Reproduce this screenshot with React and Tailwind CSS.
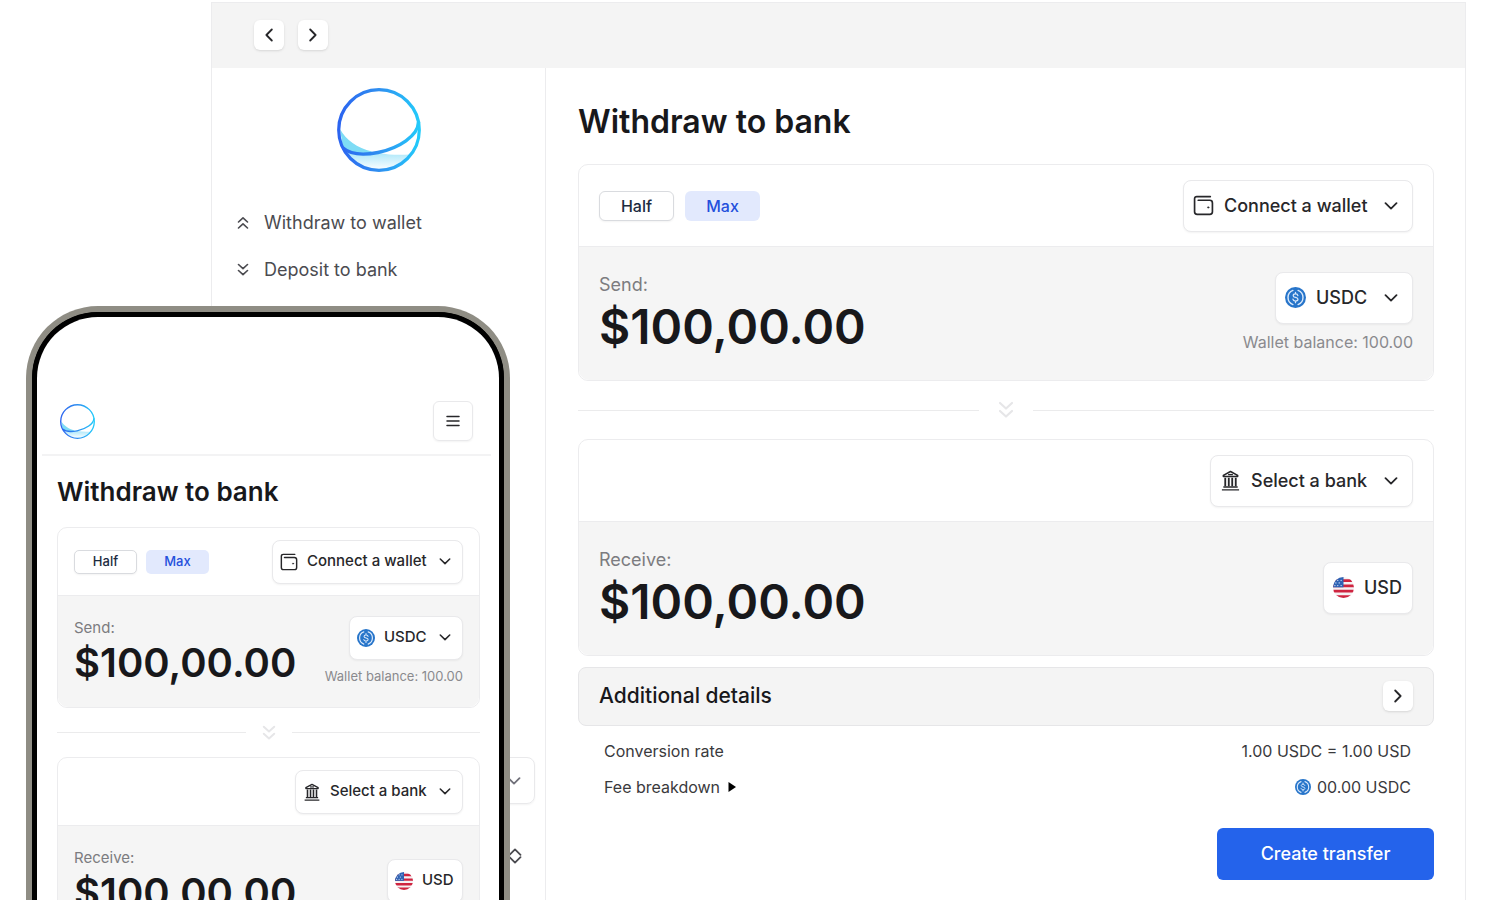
import React, { useId, useState } from "react";
import clsx from "clsx";

function Logo({ className }) {
  const id = useId();
  return (
    <svg viewBox="0 0 84 84" className={className} fill="none" aria-hidden="true">
      <defs>
        <linearGradient id={`${id}-ring`} x1="0" y1="42" x2="84" y2="42" gradientUnits="userSpaceOnUse">
          <stop offset="0" stopColor="#2b62f0" />
          <stop offset="0.5" stopColor="#2f8ff0" />
          <stop offset="1" stopColor="#22cdfb" />
        </linearGradient>
        <linearGradient id={`${id}-water`} x1="0" y1="64" x2="0" y2="80" gradientUnits="userSpaceOnUse">
          <stop offset="0" stopColor="#a9e6f9" />
          <stop offset="1" stopColor="#f4fcff" />
        </linearGradient>
      </defs>
      <path d="M3 41C9 52 20 60 35 63.500C30 67 12 67 6 60Z" fill="#7edcf5" />
      <path d="M10 64C20 68 32 67 42 65C52 67 62 67 73 66.500C66 76 55 82 42 82C28 82 17 75 10 64Z" fill={`url(#${id}-water)`} />
      <circle cx="42" cy="42" r="40.300" stroke={`url(#${id}-ring)`} strokeWidth="3.200" />
      <path d="M6 60C14 67 28 67 41 64.500C62 60 81 48 81.500 34" stroke={`url(#${id}-ring)`} strokeWidth="3.400" />
    </svg>
  );
}

function Chevron({ className }) {
  return (
    <svg viewBox="0 0 14 8" className={clsx("shrink-0", className)} fill="none" stroke="currentColor" strokeWidth="1.8" strokeLinecap="round" strokeLinejoin="round" aria-hidden="true">
      <path d="M1.500 1.200L7 6.600L12.500 1.200" />
    </svg>
  );
}

function DoubleChevron({ className }) {
  return (
    <svg viewBox="0 0 16 18" className={clsx("shrink-0", className)} fill="none" stroke="currentColor" strokeWidth="2.200" strokeLinecap="round" strokeLinejoin="round" aria-hidden="true">
      <path d="M2 2L8 7.500L14 2M2 10L8 15.500L14 10" />
    </svg>
  );
}

function WalletIcon({ className }) {
  return (
    <svg viewBox="0 0 20 20" className={clsx("shrink-0", className)} fill="none" stroke="currentColor" strokeWidth="1.6" strokeLinecap="round" strokeLinejoin="round" aria-hidden="true">
      <path d="M16.500 1.500H3.500A2 2 0 0 0 1.500 3.500V16A2.500 2.500 0 0 0 4 18.500H16A2.500 2.500 0 0 0 18.500 16V7.500A2.500 2.500 0 0 0 16 5H5" />
      <circle cx="14.500" cy="11.800" r="0.700" fill="currentColor" strokeWidth="0.500" />
    </svg>
  );
}

function BankIcon({ className }) {
  return (
    <svg viewBox="0 0 20 22" className={clsx("shrink-0", className)} fill="none" stroke="currentColor" aria-hidden="true">
      <path d="M2.500 6.800V5.600L10 1.600L17.500 5.600V6.800Z" strokeWidth="1.600" strokeLinejoin="round" />
      <path d="M7.500 4.800H12.500" strokeWidth="1.400" />
      <path d="M4.500 8V17M8.200 8V17M11.800 8V17M15.500 8V17" strokeWidth="1.900" />
      <path d="M2.500 17.800H17.500M1 20.800H19" strokeWidth="1.500" />
    </svg>
  );
}

function UsdcIcon({ className }) {
  return (
    <svg viewBox="0 0 22 22" className={clsx("shrink-0", className)} fill="none" stroke="#d9e8fa" strokeLinecap="round" aria-hidden="true">
      <circle cx="11" cy="11" r="11" fill="#2775ca" stroke="none" />
      <path d="M8.300 3.600A7.900 7.900 0 0 0 8.300 18.400M13.700 3.600A7.900 7.900 0 0 1 13.700 18.400" strokeWidth="1.500" />
      <path d="M13.500 9C13.300 7.800 12.300 7.300 11 7.300C9.600 7.300 8.600 8 8.600 9.100C8.600 11.600 13.600 10.300 13.600 12.900C13.600 14.100 12.500 14.700 11 14.700C9.600 14.700 8.500 14.100 8.300 12.800M11 5.600V7.300M11 14.700V16.400" strokeWidth="1.300" />
    </svg>
  );
}

function UsFlag({ className }) {
  const id = useId();
  return (
    <svg viewBox="0 0 22 22" className={clsx("shrink-0", className)} aria-hidden="true">
      <clipPath id={id}>
        <circle cx="11" cy="11" r="11" />
      </clipPath>
      <g clipPath={`url(#${id})`}>
        <rect width="22" height="22" fill="#f5f1f3" />
        <path d="M0 3.700H22M0 9.300H22M0 14.900H22M0 20.500H22" stroke="#cf2440" strokeWidth="2.900" />
        <rect width="11" height="10.800" fill="#2f62b4" />
        <g fill="#dce8fa">
          <circle cx="5" cy="3.500" r="0.700" />
          <circle cx="8.500" cy="3.500" r="0.700" />
          <circle cx="3" cy="6.200" r="0.700" />
          <circle cx="6.500" cy="6.200" r="0.700" />
          <circle cx="2" cy="9" r="0.700" />
          <circle cx="5" cy="9" r="0.700" />
          <circle cx="8.500" cy="9" r="0.700" />
        </g>
      </g>
    </svg>
  );
}

function Dropdown({ icon: Icon, label, option, compact, hideChevron }) {
  return (
    <label
      className={clsx(
        "flex items-center rounded-lg border border-[#e9e9eb] bg-white font-medium text-[#27272a] shadow-xs",
        compact ? "h-11 gap-[9px] pl-[7px] text-[15px]" : "h-[52px] gap-[10px] pl-[9px] text-lg",
        hideChevron ? (compact ? "pr-2" : "pr-[10px]") : compact ? "pr-[11px]" : "pr-[14px]"
      )}
    >
      <Icon className={compact ? "h-[18px] w-[18px]" : "h-[21px] w-[21px]"} />
      <select aria-label={label} className="appearance-none bg-transparent outline-none">
        <option>{option}</option>
      </select>
      {!hideChevron && <Chevron className={compact ? "ml-[3px] w-3" : "ml-[6px] w-[14px]"} />}
    </label>
  );
}

function SmallButton({ children, label }) {
  return (
    <button
      aria-label={label}
      className="flex h-[30px] w-[30px] items-center justify-center rounded-md bg-white text-[#27272a] shadow-sm"
    >
      {children}
    </button>
  );
}

function TransferCard({ title, amount, header, side, compact }) {
  const id = useId();
  const [value, setValue] = useState(amount);

  return (
    <section className="rounded-[10px] border border-[#ececee] bg-white">
      <div className={clsx("flex items-center justify-between", compact ? "h-[67px] px-4" : "h-[81px] px-5")}>
        {header}
      </div>
      <div
        className={clsx(
          "flex items-center justify-between rounded-b-[10px] border-t border-[#ececee] bg-[#f5f5f5]",
          compact ? "h-28 px-4 pb-[2px]" : "h-[134px] px-5 pb-[2px]"
        )}
      >
        <div className="min-w-0 flex-1">
          <label htmlFor={id} className={clsx("block text-[#7c7c80]", compact ? "text-[15px] leading-6" : "text-lg leading-7")}>
            {title}
          </label>
          <input
            id={id}
            type="text"
            value={value}
            onChange={(e) => setValue(e.target.value)}
            className={clsx(
              "block w-full bg-transparent font-semibold text-[#18181b] outline-none",
              compact ? "h-[46px] text-[40px]" : "h-14 text-5xl"
            )}
          />
        </div>
        <div className="flex flex-col items-end gap-[6px]">{side}</div>
      </div>
    </section>
  );
}

function TransferForm({ compact }) {
  const quick = compact ? "h-6 w-[63px] rounded-[5px] text-[13px]" : "h-[30px] w-[75px] rounded-md text-base";

  return (
    <>
      <TransferCard
        title="Send:"
        amount="$100,00.00"
        compact={compact}
        header={
          <>
            <div className={clsx("flex", compact ? "gap-[9px]" : "gap-[11px]")}>
              <button className={clsx("border border-[#d9dbdf] bg-white font-medium text-[#1c2b3f] shadow-xs", quick)}>
                Half
              </button>
              <button className={clsx("bg-[#e2e9fd] font-medium text-[#2450dc]", quick)}>Max</button>
            </div>
            <Dropdown icon={WalletIcon} label="Wallet" option="Connect a wallet" compact={compact} />
          </>
        }
        side={
          <>
            <Dropdown icon={UsdcIcon} label="Currency" option="USDC" compact={compact} />
            <p className={clsx("text-[#8a8a8e]", compact ? "text-[13px] leading-5" : "text-base leading-6")}>
              Wallet balance: 100.00
            </p>
          </>
        }
      />

      <div className={clsx("flex items-center", compact ? "h-[49px] gap-4" : "h-[58px] gap-[19px]")}>
        <hr className="flex-1 border-[#ebebec]" />
        <DoubleChevron className={clsx("text-[#e6e6e8]", compact ? "w-[14px]" : "w-4")} />
        <hr className="flex-1 border-[#ebebec]" />
      </div>

      <TransferCard
        title="Receive:"
        amount="$100,00.00"
        compact={compact}
        header={
          <>
            <span />
            <Dropdown icon={BankIcon} label="Bank" option="Select a bank" compact={compact} />
          </>
        }
        side={<Dropdown icon={UsFlag} label="Payout currency" option="USD" compact={compact} hideChevron />}
      />
    </>
  );
}

function Sidebar() {
  return (
    <aside className="flex w-[334px] shrink-0 flex-col border-r border-[#ececee]">
      <Logo className="mt-5 h-[84px] w-[84px] self-center" />
      <nav className="mt-[27px] flex flex-col px-[25px] text-lg text-[#4b4b50]">
        <a href="#wallet" className="flex h-[47px] items-center gap-[15px]">
          <DoubleChevron className="w-3 rotate-180" />
          Withdraw to wallet
        </a>
        <a href="#bank" className="flex h-[47px] items-center gap-[15px]">
          <DoubleChevron className="w-3" />
          Deposit to bank
        </a>
      </nav>
      <div className="mt-auto flex flex-col items-end pr-[10px] pb-8">
        <button
          aria-label="Network"
          className="flex h-[47px] w-full items-center justify-end rounded-lg border border-[#e9e9eb] pr-[13px] text-[#71717a] shadow-xs"
        >
          <Chevron className="w-[14px]" />
        </button>
        <button aria-label="Account" className="mt-10 mr-[13px] flex h-6 flex-col items-center justify-center text-[#4b4b50]">
          <Chevron className="w-[14px] rotate-180" />
          <Chevron className="w-[14px]" />
        </button>
      </div>
    </aside>
  );
}

function Desktop() {
  return (
    <div className="mt-[2px] mr-[31px] ml-[211px] flex flex-1 flex-col border border-b-0 border-[#ececee]">
      <header className="flex h-[65px] items-center gap-[14px] bg-[#f4f4f4] pb-[2px] pl-[42px]">
        <SmallButton label="Back">
          <Chevron className="w-[14px] rotate-90" />
        </SmallButton>
        <SmallButton label="Forward">
          <Chevron className="w-[14px] -rotate-90" />
        </SmallButton>
      </header>
      <div className="flex flex-1">
        <Sidebar />
        <main className="flex min-w-0 flex-1 flex-col pt-[34px] pr-[31px] pb-5 pl-8">
          <h1 className="mb-[22px] text-[32px] leading-10 font-semibold text-[#18181b]">Withdraw to bank</h1>
          <TransferForm />

          <div className="mt-[11px] flex h-[59px] items-center justify-between rounded-lg border border-[#e6e6e8] bg-[#f4f4f4] px-5 pb-[2px]">
            <h2 className="text-[21px] font-medium text-[#18181b]">Additional details</h2>
            <SmallButton label="Show details">
              <Chevron className="w-[14px] -rotate-90" />
            </SmallButton>
          </div>

          <dl className="mt-[7px] pr-[23px] pl-[26px] text-base text-[#3a3a3d]">
            <div className="flex h-9 items-center justify-between">
              <dt>Conversion rate</dt>
              <dd>1.00 USDC = 1.00 USD</dd>
            </div>
            <div className="flex h-9 items-center justify-between">
              <dt>
                <button className="flex items-center gap-2">
                  Fee breakdown
                  <svg viewBox="0 0 8 10" className="h-[10px] w-2 fill-black" aria-hidden="true">
                    <path d="M0.500 0L8 5L0.500 10Z" />
                  </svg>
                </button>
              </dt>
              <dd className="flex items-center gap-[6px]">
                <UsdcIcon className="w-4" />
                00.00 USDC
              </dd>
            </div>
          </dl>

          <button className="mt-[23px] h-[52px] w-[217px] self-end rounded-md bg-[#2463eb] text-lg font-medium text-white">
            Create transfer
          </button>
        </main>
      </div>
    </div>
  );
}

function Phone() {
  return (
    <div className="absolute top-[306px] bottom-0 left-[26px] flex w-[484px] overflow-hidden rounded-t-[72px] border-x-[6px] border-t-[6px] border-[#8f8d84] bg-black">
      <div className="min-w-0 flex-1 overflow-hidden rounded-t-[66px] border-x-[5px] border-t-[5px] border-black bg-white">
        <div className="mr-2 ml-[5px] flex items-center justify-between border-b-2 border-[#f3f3f4] pt-[84px] pr-[18px] pb-[13px] pl-[18px]">
          <Logo className="h-[35px] w-[35px]" />
          <button
            aria-label="Menu"
            className="flex h-10 w-10 items-center justify-center rounded-md border border-[#e9e9eb] text-[#27272a] shadow-xs"
          >
            <svg viewBox="0 0 14 12" className="h-3 w-[14px]" stroke="currentColor" strokeWidth="1.500" strokeLinecap="round" aria-hidden="true">
              <path d="M1 1.500H13M1 6H13M1 10.500H13" />
            </svg>
          </button>
        </div>
        <div className="pt-5 pr-[19px] pl-5">
          <h1 className="mb-[19px] text-[26px] leading-8 font-semibold text-[#18181b]">Withdraw to bank</h1>
          <TransferForm compact />
        </div>
      </div>
    </div>
  );
}

function App() {
  return (
    <div className="relative flex min-h-screen flex-col overflow-hidden bg-white font-['Inter',sans-serif]">
      <Desktop />
      <Phone />
    </div>
  );
}

export default App;
